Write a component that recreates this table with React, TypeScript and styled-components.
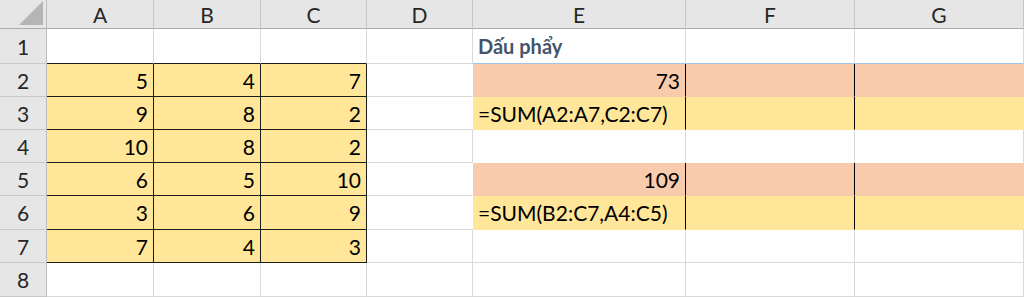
import React from "react";
import { createGlobalStyle, styled } from "styled-components";

const GlobalStyle = createGlobalStyle`
  html, body {
    margin: 0;
    padding: 0;
    background: #fff;
  }
  body {
    font-family: Lato, "Noto Sans", "Liberation Sans", sans-serif;
  }
`;

const GRID = "#d9d9d9";
const YELLOW = "#ffe699";
const ORANGE = "#f8cbad";
const HEADING_LINE = "#9dc3e6";

const COL_WIDTHS = [47, 107, 107, 106, 106, 213, 169, 169];
const ROW_HEIGHTS = [29, 35, 33, 33, 33, 33, 34, 33, 34];
const COLUMNS = ["A", "B", "C", "D", "E", "F", "G"];

const Sheet = styled.div`
  display: grid;
  grid-template-columns: ${COL_WIDTHS.map((w) => `${w}px`).join(" ")};
  grid-template-rows: ${ROW_HEIGHTS.map((h) => `${h}px`).join(" ")};
  width: 1024px;
  height: 297px;
  overflow: hidden;
  font-size: 21px;
  color: #000;
`;

const HeaderCell = styled.div<{ $corner?: boolean }>`
  box-sizing: border-box;
  display: flex;
  align-items: center;
  justify-content: center;
  position: relative;
  background: #e6e6e6;
  color: #262626;
  border-right: 1px solid ${(p) => (p.$corner ? "#bdbdbd" : "#c8c8c8")};
  border-bottom: 1px solid #ababab;
`;

const RowHeader = styled.div`
  box-sizing: border-box;
  display: flex;
  align-items: center;
  justify-content: center;
  background: #e6e6e6;
  color: #262626;
  border-right: 1px solid #bdbdbd;
  border-bottom: 1px solid #c8c8c8;
`;

// select-all triangle in the top-left corner
const SelectAll = styled.div`
  position: absolute;
  right: 3px;
  bottom: 3px;
  width: 24px;
  height: 24px;
  background: #b5b5b5;
  clip-path: polygon(100% 0, 100% 100%, 0 100%);
`;

const Cell = styled.div<{
  $bg: string;
  $right: string;
  $bottom: string;
  $align: "left" | "right";
  $heading?: boolean;
}>`
  box-sizing: border-box;
  display: flex;
  align-items: center;
  justify-content: ${(p) => (p.$align === "right" ? "flex-end" : "flex-start")};
  padding: 0 5px;
  white-space: nowrap;
  overflow: visible;
  background: ${(p) => p.$bg};
  border-right: 1px solid ${(p) => p.$right};
  border-bottom: 1px solid ${(p) => p.$bottom};
  font-size: ${(p) => (p.$heading ? "20px" : "21px")};
  font-weight: ${(p) => (p.$heading ? 700 : 400)};
  color: ${(p) => (p.$heading ? "#44546a" : "#000")};
`;

type Value = string | number | null;

const data: Value[][] = [
  [null, null, null, null, "Dấu phẩy", null, null],
  [5, 4, 7, null, 73, null, null],
  [9, 8, 2, null, "=SUM(A2:A7,C2:C7)", null, null],
  [10, 8, 2, null, null, null, null],
  [6, 5, 10, null, 109, null, null],
  [3, 6, 9, null, "=SUM(B2:C7,A4:C5)", null, null],
  [7, 4, 3, null, null, null, null],
  [null, null, null, null, null, null, null],
];

const inBox = (r: number, c: number) => r >= 2 && r <= 7 && c <= 2;
const resultFill = (r: number) =>
  r === 2 || r === 5 ? ORANGE : r === 3 || r === 6 ? YELLOW : null;

function cellStyle(r: number, c: number) {
  const fill = c >= 4 ? resultFill(r) : null;
  let bg = "#fff";
  let right = GRID;
  let bottom = GRID;

  if (inBox(r, c)) {
    bg = YELLOW;
    right = "#1a1a1a";
    bottom = "#1a1a1a";
  }
  if (r === 1 && c <= 2) bottom = "#1a1a1a";
  if (r === 1 && c >= 4) bottom = HEADING_LINE;

  if (fill) {
    bg = fill;
    bottom = "transparent";
    right = c === 6 ? "transparent" : "#000";
  }
  if (c === 3 && resultFill(r)) right = "transparent";
  if (c >= 4 && r === 4) bottom = "transparent";

  return { bg, right, bottom };
}

export default function App() {
  return (
    <>
      <GlobalStyle />
      <Sheet>
        <HeaderCell $corner>
          <SelectAll />
        </HeaderCell>
        {COLUMNS.map((name) => (
          <HeaderCell key={name}>{name}</HeaderCell>
        ))}
        {data.map((row, i) => {
          const r = i + 1;
          return (
            <React.Fragment key={r}>
              <RowHeader>{r}</RowHeader>
              {row.map((value, c) => {
                const { bg, right, bottom } = cellStyle(r, c);
                return (
                  <Cell
                    key={c}
                    $bg={bg}
                    $right={right}
                    $bottom={bottom}
                    $align={typeof value === "number" ? "right" : "left"}
                    $heading={r === 1 && c === 4}
                  >
                    {value}
                  </Cell>
                );
              })}
            </React.Fragment>
          );
        })}
      </Sheet>
    </>
  );
}
